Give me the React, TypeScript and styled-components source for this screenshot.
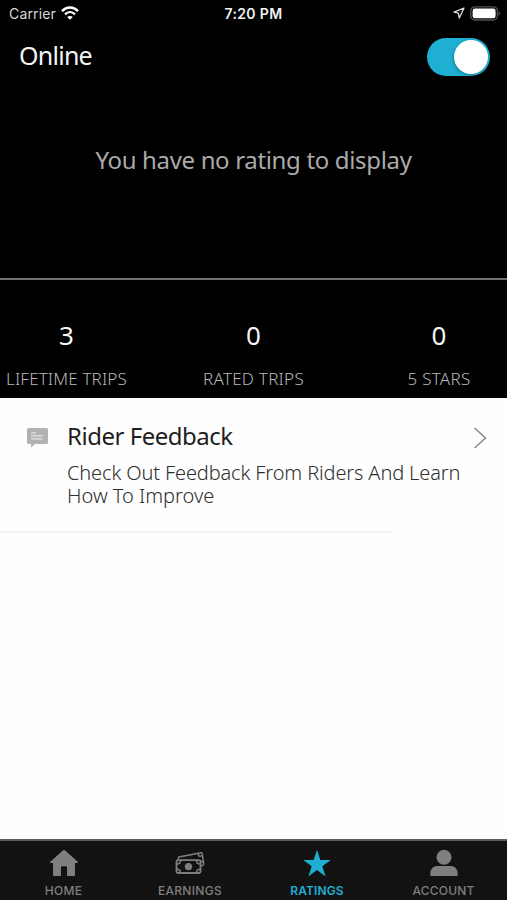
import React from "react";
import styled, { createGlobalStyle } from "styled-components";

const GlobalStyle = createGlobalStyle`
  * { box-sizing: border-box; }
  body { margin: 0; background: #fff; }
`;

const Screen = styled.div`
  width: 507px;
  height: 900px;
  display: flex;
  flex-direction: column;
  overflow: hidden;
  background: #fefefe;
  font-family: "Noto Sans", "Open Sans", sans-serif;
  white-space: nowrap;
`;

const StatusBar = styled.div`
  height: 28px;
  padding: 0 6px 2px 9px;
  display: grid;
  grid-template-columns: 1fr auto 1fr;
  align-items: center;
  background: #000;
  color: #d8d8d8;
  font-family: Inter, sans-serif;
  font-size: 14px;
`;

const StatusGroup = styled.div<{ $end?: boolean }>`
  display: flex;
  align-items: center;
  justify-content: ${(p) => (p.$end ? "flex-end" : "flex-start")};
  gap: 5px;
  letter-spacing: 0.15px;
`;

const Clock = styled.div`
  color: #f2f2f2;
  font-weight: 600;
  font-size: 14px;
  letter-spacing: 0.35px;
  padding-right: 3px;
`;

const Header = styled.header`
  height: 57px;
  padding: 0 17px 0 19px;
  display: flex;
  align-items: center;
  justify-content: space-between;
  background: #000;
`;

const Title = styled.h1`
  margin: -3px 0 0;
  color: #f4f4f4;
  font-size: 25px;
  font-weight: 400;
  letter-spacing: -0.75px;
`;

const Toggle = styled.button`
  width: 63px;
  height: 38px;
  padding: 2px;
  border: 0;
  border-radius: 19px;
  display: flex;
  justify-content: flex-end;
  background: #1fafd2;
`;

const Knob = styled.span`
  width: 34px;
  height: 34px;
  border-radius: 50%;
  background: #fff;
  box-shadow: -1px 1px 3px rgba(0, 0, 0, 0.25);
`;

const EmptyRating = styled.section`
  height: 195px;
  padding-top: 58px;
  border-bottom: 2px solid #707070;
  background: #000;
  color: #aaa;
  font-size: 24px;
  line-height: 34px;
  text-align: center;
`;

const EmptyText = styled.span`
  letter-spacing: -0.34px;
`;

const Stats = styled.section`
  height: 118px;
  display: grid;
  grid-template-columns: 133px 241px 130px;
  background: #000;
  text-align: center;
`;

const Stat = styled.div`
  padding-top: 37px;
`;

const StatValue = styled.div`
  color: #f5f5f5;
  font-size: 26px;
  line-height: 36px;
`;

const StatLabel = styled.div<{ $spacing: number }>`
  margin-top: 13px;
  color: #b8b8b8;
  font-size: 17px;
  font-weight: 300;
  line-height: 26px;
  letter-spacing: ${(p) => p.$spacing}px;
`;

const FeedbackRow = styled.section`
  height: 133px;
  padding: 22px 18px 0 26px;
  display: grid;
  grid-template-columns: 41px 1fr 16px;
  align-items: start;
`;

const FeedbackTitle = styled.h2`
  margin: 0;
  color: #1e1e1e;
  font-size: 24px;
  font-weight: 400;
  line-height: 32px;
  letter-spacing: -0.48px;
`;

const FeedbackText = styled.p`
  margin: 9px 0 0;
  color: #2e2e2e;
  font-size: 20px;
  font-weight: 300;
  line-height: 23px;
`;

const FeedbackLine = styled.span<{ $spacing: number }>`
  display: block;
  letter-spacing: ${(p) => p.$spacing}px;
`;

const RowIcon = styled.div<{ $top: number }>`
  padding-top: ${(p) => p.$top}px;
  line-height: 0;
`;

const Separator = styled.div`
  width: 392px;
  height: 2px;
  background: #f1f1f1;
`;

const TabBar = styled.nav`
  height: 61px;
  margin-top: auto;
  padding-top: 8px;
  display: grid;
  grid-template-columns: 127px 126px 128px 125px;
  border-top: 2px solid #5c5c5c;
  background: #121212;
`;

const Tab = styled.a<{ $active?: boolean }>`
  display: flex;
  flex-direction: column;
  align-items: center;
  color: ${(p) => (p.$active ? "#1fafd2" : "#7f7f7f")};
  font-family: Inter, sans-serif;
  font-size: 12px;
  font-weight: ${(p) => (p.$active ? 600 : 500)};
  line-height: 16px;

  svg { display: block; margin-bottom: 6px; }
`;

const TabLabel = styled.span<{ $spacing: number }>`
  letter-spacing: ${(p) => p.$spacing}px;
`;

const WifiIcon = () => (
  <svg width="18" height="14" viewBox="0 0 18 14" fill="none" stroke="#fff">
    <path d="M1 5.1C5.6.4 12.4.4 17 5.1" strokeWidth="2.5" />
    <path d="M4 8.3c3-2.9 7-2.9 10 0" strokeWidth="2.3" />
    <path d="M9 13.8 6.2 11c1.6-1.4 4-1.4 5.6 0Z" fill="#fff" stroke="none" />
  </svg>
);

const LocationIcon = () => (
  <svg width="12" height="12" viewBox="0 0 12 12" fill="none" stroke="#ddd" strokeWidth="1.3" strokeLinejoin="round">
    <path d="M11 1 1 5.2l4.3 1 1 4.8Z" />
  </svg>
);

const BatteryIcon = () => (
  <svg width="31" height="15" viewBox="0 0 31 15">
    <rect x=".8" y=".8" width="26.6" height="13.2" rx="4" fill="none" stroke="#555" strokeWidth="1.3" />
    <rect x="2.6" y="2.6" width="23" height="9.6" rx="2.3" fill="#fff" />
    <path d="M28.6 5.2q3.2 2.2 0 4.4Z" fill="#555" />
  </svg>
);

const MessageIcon = () => (
  <svg width="23" height="20" viewBox="0 0 23 20">
    <path d="M2.5 0h18q1.5 0 1.5 1.5v13q0 1.5-1.5 1.5H9l-4 3.500V16H2.500Q1 16 1 14.500v-13Q1 0 2.500 0Z" fill="#b2b2b4" />
    <path d="M5 4.800h5M5 7.900h12M5 10.900h11.500" stroke="#e4e4e4" strokeWidth="1.200" />
  </svg>
);

const ChevronIcon = () => (
  <svg width="14" height="22" viewBox="0 0 14 22" fill="none" stroke="#888" strokeWidth="1.5">
    <path d="m1.500 1 11 10-11 10" />
  </svg>
);

const HomeIcon = () => (
  <svg width="30" height="28" viewBox="0 0 30 28" fill="currentColor">
    <path d="M15 .5 29 12.900q.4 1.100-.8 1.100H26v11.800q0 1.200-1.200 1.200H18v-8.800q0-1-1-1h-4q-1 0-1 1V27H5.200Q4 27 4 25.800V14H1.800Q.6 14 1 12.900Z" />
  </svg>
);

const CashIcon = () => (
  <svg width="30" height="28" viewBox="0 0 30 28" fill="none" stroke="currentColor" strokeWidth="1.5">
    <path d="M3 10 4 8l22-4.200q1-.2 1.200.8l1.500 10.500q.1 1-1 1.300l-2 .4" />
    <path d="m23 4.500 1.200 2.700 3.300-.2M28.500 13l-2.500-.8" />
    <rect x="1.500" y="11.200" width="24" height="12.800" rx="1.500" strokeWidth="1.800" />
    <circle cx="13.500" cy="17.600" r="3.700" fill="currentColor" stroke="none" />
    <path d="M2 15q3.500 0 3.500-3.500M25 15q-3.500 0-3.500-3.500M2 20.200q3.500 0 3.500 3.500M25 20.200q-3.500 0-3.500 3.500" />
  </svg>
);

const StarIcon = () => (
  <svg width="30" height="28" viewBox="0 0 30 28" fill="currentColor">
    <path d="m15 .8 3.300 10.200h10.500l-8.500 6.200 3.300 10.200L15 21.100l-8.600 6.300 3.300-10.200L1.200 11h10.500Z" />
  </svg>
);

const PersonIcon = () => (
  <svg width="30" height="28" viewBox="0 0 30 28" fill="currentColor">
    <circle cx="15" cy="8.300" r="7.500" />
    <path d="M1.200 25.500C1.200 20 4 17 8.500 17h13c4.500 0 7.300 3 7.300 8.500q0 1.500-1.500 1.500H2.700q-1.500 0-1.500-1.500Z" />
  </svg>
);

const stats = [
  { value: "3", label: "LIFETIME TRIPS", spacing: 0.15 },
  { value: "0", label: "RATED TRIPS", spacing: 0.25 },
  { value: "0", label: "5 STARS", spacing: 0.3 },
];

const tabs = [
  { label: "HOME", Icon: HomeIcon, spacing: 0.3 },
  { label: "EARNINGS", Icon: CashIcon, spacing: 0.3 },
  { label: "RATINGS", Icon: StarIcon, spacing: 0.1, active: true },
  { label: "ACCOUNT", Icon: PersonIcon, spacing: 0.2 },
];

export default function App() {
  return (
    <Screen>
      <GlobalStyle />
      <StatusBar>
        <StatusGroup>Carrier <WifiIcon /></StatusGroup>
        <Clock>7:20 PM</Clock>
        <StatusGroup $end><LocationIcon /><BatteryIcon /></StatusGroup>
      </StatusBar>
      <Header>
        <Title>Online</Title>
        <Toggle role="switch" aria-checked="true" aria-label="Online"><Knob /></Toggle>
      </Header>
      <EmptyRating><EmptyText>You have no rating to display</EmptyText></EmptyRating>
      <Stats>
        {stats.map((s) => (
          <Stat key={s.label}>
            <StatValue>{s.value}</StatValue>
            <StatLabel $spacing={s.spacing}>{s.label}</StatLabel>
          </Stat>
        ))}
      </Stats>
      <FeedbackRow>
        <RowIcon $top={8}><MessageIcon /></RowIcon>
        <div>
          <FeedbackTitle>Rider Feedback</FeedbackTitle>
          <FeedbackText>
            <FeedbackLine $spacing={-0.13}>Check Out Feedback From Riders And Learn</FeedbackLine>
            <FeedbackLine $spacing={0}>How To Improve</FeedbackLine>
          </FeedbackText>
        </div>
        <RowIcon $top={7}><ChevronIcon /></RowIcon>
      </FeedbackRow>
      <Separator />
      <TabBar>
        {tabs.map(({ label, Icon, spacing, active }) => (
          <Tab key={label} $active={active}>
            <Icon />
            <TabLabel $spacing={spacing}>{label}</TabLabel>
          </Tab>
        ))}
      </TabBar>
    </Screen>
  );
}
